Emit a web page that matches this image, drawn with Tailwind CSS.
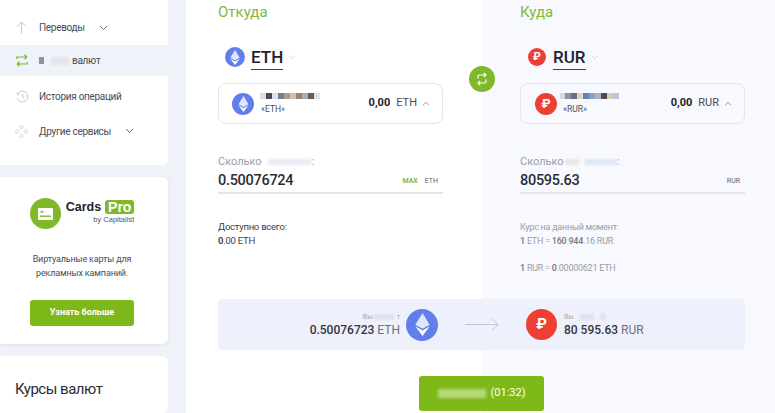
<!DOCTYPE html>
<html lang="ru">
<head>
    <meta charset="UTF-8">
    <title>Обмен валют</title>
    <script src="https://cdn.jsdelivr.net/npm/@tailwindcss/browser@4"></script>
</head>
<body class="bg-[#f0f2f9] font-['Roboto',sans-serif] text-[#2b2d33] h-[413px] w-[775px] overflow-hidden">
<div class="flex h-[413px] overflow-hidden">
    <!-- Sidebar -->
    <aside class="w-[168px] shrink-0 flex flex-col gap-3">
        <nav class="bg-white rounded-br-md h-[165px] pt-[10px] text-[10px] tracking-[-0.3px] text-[#4a4d57]">
            <div class="h-[35px] flex items-center pl-[15px] gap-[11px]">
                <svg class="w-[13px] h-[13px]" viewBox="0 0 13 13" fill="none" stroke="#c3c7cf" stroke-width="1"><path d="M6.5 12.5V1M2 5.5 6.5 1 11 5.5"/></svg>
                <span>Переводы</span>
                <svg class="w-[9px] h-[6px] ml-[3px]" viewBox="0 0 9 6" fill="none" stroke="#6b6f7a"><path d="M1 1l3.5 3.5L8 1"/></svg>
            </div>
            <div class="h-[31px] bg-[#f0f2f9] flex items-center pl-[16px] gap-[11px]">
                <svg class="w-[12px] h-[13px]" viewBox="0 0 12 13" fill="none" stroke="#7fb92a" stroke-width="1.2"><path d="M.8 5V3h10M8.5.8l2.3 2.2-2.3 2.2M11.2 8v2H1M3.5 7.8 1.2 10l2.3 2.2"/></svg>
                <span class="flex items-center">
                    <span class="w-[5px] h-[7px] bg-[#8b93a6] blur-[0.5px]"></span>
                    <span class="w-[18px] h-[8px] ml-[7px] bg-[#e4e5ea] blur-[1px]"></span>
                    <span class="ml-[3px]">валют</span>
                </span>
            </div>
            <div class="h-[40px] flex items-center pl-[16px] gap-[10px]">
                <svg class="w-[13px] h-[13px]" viewBox="0 0 13 13" fill="none" stroke="#c3c7cf"><path d="M1.6 4.2A5.4 5.4 0 1 1 1.2 8M.6 2.6l1 1.9 1.9-.7M6.6 3.8v3l2 1"/></svg>
                <span>История операций</span>
            </div>
            <div class="h-[30px] flex items-center pl-[14px] gap-[10px]">
                <svg class="w-[15px] h-[15px]" viewBox="0 0 15 15" fill="none" stroke="#c9ccd4" stroke-width=".9"><path d="M7.5 1l2 2-2 2-2-2zM3 5.5l2 2-2 2-2-2zM12 5.5l2 2-2 2-2-2zM7.5 10l2 2-2 2-2-2z"/></svg>
                <span>Другие сервисы</span>
                <svg class="w-[9px] h-[6px] ml-[4px]" viewBox="0 0 9 6" fill="none" stroke="#6b6f7a"><path d="M1 1l3.5 3.5L8 1"/></svg>
            </div>
        </nav>
        <section class="bg-white rounded-r-md h-[167px] pr-[4px] shadow-[0_1px_4px_rgba(40,50,80,0.08)] flex flex-col items-center">
            <div class="flex mt-[21px] items-center">
                <div class="w-[31px] h-[31px] rounded-full bg-[#7fb92a] flex items-center justify-center">
                    <svg class="w-[15px] h-[12px]" viewBox="0 0 15 12"><rect width="15" height="12" rx="1" fill="#fff"/><rect x="2.5" y="3" width="3" height="1.6" fill="#7fb92a"/><rect x="2" y="7.5" width="11" height="1.4" fill="#7fb92a"/></svg>
                </div>
                <div class="ml-[5px] mt-[-3px] font-['Liberation_Sans',sans-serif] text-right">
                    <div class="flex items-center gap-[4px] text-[12.5px] font-bold text-[#20232b] leading-[14px]">
                        Cards
                        <span class="bg-[#7fb92a] text-white rounded-[3px] w-[29px] text-center text-[14px] leading-[14px]">Pro</span>
                    </div>
                    <div class="text-[7.5px] text-[#55585f] leading-[9px] mt-[1px]">by Capitalist</div>
                </div>
            </div>
            <p class="text-[9px] tracking-[-0.15px] leading-[14px] text-center text-[#4a4d57] mt-[23px]">Виртуальные карты для<br>рекламных кампаний.</p>
            <a class="mt-[20px] w-[104px] h-[26px] rounded-[3px] bg-[#7fb919] text-white font-bold text-[9px] flex items-center justify-center">Узнать больше</a>
        </section>
        <section class="bg-white rounded-r-md flex-1 pt-[22px] pl-[15px]">
            <h2 class="text-[15px] tracking-[-0.5px] leading-[22px] text-[#2b2d33]">Курсы валют</h2>
        </section>
    </aside>

    <!-- Exchange form -->
    <main class="relative ml-[18px] flex-1 bg-[linear-gradient(90deg,#fff_296px,#f8f9fe_296px)]">
        <div class="flex h-[299px]">
            <div class="w-[296px] pl-[32px] shrink-0">
                <h2 class="text-[15px] leading-[20px] pt-[2px] text-[#84b83a]">Откуда</h2>
                <div class="mt-[24px] ml-[7px] flex items-center h-[22px]">
                    <span class="w-[20px] h-[20px] rounded-full bg-[#627eea] flex items-center justify-center">
                        <svg class="w-[10px] h-[15px]" viewBox="0 0 10 16"><path d="M5 0 0 8.2 5 11l5-2.8z" fill="#dfe5fb"/><path d="M5 12.2 0 9.2 5 16l5-6.8z" fill="#fff"/></svg>
                    </span>
                    <span class="ml-[6px] text-[17px] leading-[22px] font-medium text-[#20232b] border-b border-[#444] h-[24px] mt-[2px]">ETH</span>
                    <svg class="w-[7px] h-[5px] ml-[5px]" viewBox="0 0 9 6" fill="none" stroke="#c3c7cf"><path d="M1 1l3.5 3.5L8 1"/></svg>
                </div>
                <div class="mt-[15px] w-[225px] h-[41px] border border-[#e3e5ea] rounded-lg bg-white flex items-center pl-[13px] pr-[12px]">
                    <span class="w-[22px] h-[22px] rounded-full bg-[#627eea] flex items-center justify-center">
                        <svg class="w-[11px] h-[16px]" viewBox="0 0 10 16"><path d="M5 0 0 8.2 5 11l5-2.8z" fill="#dfe5fb"/><path d="M5 12.2 0 9.2 5 16l5-6.8z" fill="#fff"/></svg>
                    </span>
                    <div class="ml-[6px] flex-1">
                        <div class="flex h-[6px] blur-[0.4px] w-[60px]">
                            <i class="w-[6px] bg-[#dcdde3]"></i><i class="w-[6px] bg-[#4c4a55]"></i><i class="w-[6px] bg-[#dce3ea]"></i><i class="w-[6px] bg-[#6d7f92]"></i><i class="w-[6px] bg-[#b39a85]"></i><i class="w-[6px] bg-[#c9c1b4]"></i><i class="w-[6px] bg-[#a67f6b]"></i><i class="w-[6px] bg-[#9eb0bf]"></i><i class="w-[6px] bg-[#6c5a50]"></i><i class="w-[6px] bg-[#e5e3e3]"></i>
                        </div>
                        <div class="text-[8.5px] leading-[10px] mt-[5px] ml-px text-[#4a4d57]">«ETH»</div>
                    </div>
                    <span class="text-[11px] font-bold text-[#20232b]">0,00</span>
                    <span class="text-[11px] ml-[6px] text-[#4a4d57]">ETH</span>
                    <svg class="w-[8px] h-[5px] ml-[5px]" viewBox="0 0 9 6" fill="none" stroke="#7d818c"><path d="M1 5l3.5-3.5L8 5"/></svg>
                </div>
                <label class="block mt-[30px] text-[11px] leading-[16px] text-[#9a9da6]">
                    <span class="inline-flex items-center">Сколько <i class="w-[44px] h-[6px] ml-[6px] bg-[#e8ecf3] blur-[1.5px]"></i>:</span>
                </label>
                <div class="w-[225px] h-[24px] border-b-2 border-[#e3e4e8] flex items-center">
                    <span class="flex-1 text-[14.5px] tracking-[-0.3px] font-medium text-[#2b2d33]">0.50076724</span>
                    <span class="text-[7px] font-bold text-[#8ab83d]">MAX</span>
                    <span class="text-[7px] ml-[7px] mr-[5px] text-[#5b5e68]">ETH</span>
                </div>
                <p class="mt-[26px] text-[9.5px] tracking-[-0.25px] leading-[14px] text-[#3d4048]">Доступно всего:<br><b class="font-semibold">0</b>.00 ETH</p>
            </div>
            <div class="flex-1 pl-[38px]">
                <h2 class="text-[15px] leading-[20px] pt-[2px] text-[#84b83a]">Куда</h2>
                <div class="mt-[24px] ml-[8px] flex items-center h-[22px]">
                    <span class="w-[18px] h-[18px] rounded-full bg-[#ee3f35] text-white text-[11px] font-bold flex items-center justify-center">₽</span>
                    <span class="ml-[7px] text-[17px] leading-[22px] font-medium text-[#20232b] border-b border-[#444] h-[24px] mt-[2px]">RUR</span>
                    <svg class="w-[7px] h-[5px] ml-[5px]" viewBox="0 0 9 6" fill="none" stroke="#c3c7cf"><path d="M1 1l3.5 3.5L8 1"/></svg>
                </div>
                <div class="mt-[15px] w-[225px] h-[41px] border border-[#e3e5ea] rounded-lg flex items-center pl-[14px] pr-[12px]">
                    <span class="w-[22px] h-[22px] rounded-full bg-[#ee3f35] text-white text-[13px] font-bold flex items-center justify-center">₽</span>
                    <div class="ml-[3px] flex-1">
                        <div class="flex h-[6px] blur-[0.4px] w-[60px]">
                            <i class="w-[5px] bg-[#d7dae3]"></i><i class="w-[6px] bg-[#8d93a5]"></i><i class="w-[6px] bg-[#6c7082]"></i><i class="w-[6px] bg-[#ddd3c0]"></i><i class="w-[6px] bg-[#5f85c0]"></i><i class="w-[6px] bg-[#8ea0b8]"></i><i class="w-[6px] bg-[#a9b5c4]"></i><i class="w-[6px] bg-[#544b50]"></i><i class="w-[6px] bg-[#d9cdb6]"></i><i class="w-[6px] bg-[#bcc7dc]"></i>
                        </div>
                        <div class="text-[8.5px] leading-[10px] mt-[5px] ml-[3px] text-[#4a4d57]">«RUR»</div>
                    </div>
                    <span class="text-[11px] font-bold text-[#20232b]">0,00</span>
                    <span class="text-[11px] ml-[6px] text-[#4a4d57]">RUR</span>
                    <svg class="w-[8px] h-[5px] ml-[5px]" viewBox="0 0 9 6" fill="none" stroke="#7d818c"><path d="M1 5l3.5-3.5L8 5"/></svg>
                </div>
                <label class="block mt-[30px] text-[11px] leading-[16px] text-[#9a9da6]">
                    <span class="inline-flex items-center">Сколько<i class="w-[14px] h-[6px] ml-[1px] bg-[#ebe6e2] blur-[1px]"></i><i class="w-[32px] h-[6px] ml-[6px] bg-[#dfe7f4] blur-[1px]"></i>:</span>
                </label>
                <div class="w-[225px] h-[24px] border-b-2 border-[#e3e4e8] flex items-center justify-between">
                    <span class="text-[14.5px] tracking-[-0.3px] font-medium text-[#2b2d33]">80595.63</span>
                    <span class="text-[7px] mr-[5px] text-[#5b5e68]">RUR</span>
                </div>
                <div class="mt-[26px] text-[9px] tracking-[-0.25px] leading-[14px] text-[#9a9da6]">
                    <p>Курс на данный момент:</p>
                    <p><b class="font-semibold text-[#7d818c]">1</b> ETH = <b class="font-semibold text-[#7d818c]">160 944</b>.16 RUR</p>
                    <p class="mt-[13px]"><b class="font-semibold text-[#7d818c]">1</b> RUR = <b class="font-semibold text-[#7d818c]">0</b>.00000621 ETH</p>
                </div>
            </div>
        </div>

        <!-- Summary -->
        <div class="ml-[32px] w-[527px] h-[51px] bg-[#eef0fb] rounded-[4px] flex items-center">
            <div class="w-[182px] text-right">
                <div class="text-[7px] leading-[10px] text-[#a5a8b2] flex justify-end items-center">Вы<i class="w-[20px] h-[6px] ml-px mr-[3px] bg-[#dfe2ee] blur-[1px]"></i>т</div>
                <div class="text-[12px] leading-[16px] font-medium text-[#33353c]">0.50076723 <span class="font-normal text-[#6d7079]">ETH</span></div>
            </div>
            <span class="ml-[6px] w-[32px] h-[32px] rounded-full bg-[#627eea] flex items-center justify-center">
                <svg class="w-[15px] h-[23px]" viewBox="0 0 10 16"><path d="M5 0 0 8.2 5 11l5-2.8z" fill="#dfe5fb"/><path d="M5 12.2 0 9.2 5 16l5-6.8z" fill="#fff"/></svg>
            </span>
            <svg class="w-[34px] h-[13px] ml-[27px]" viewBox="0 0 34 13" fill="none" stroke="#c2c5cf"><path d="M0 6.5h33M27 .7l6 5.8-6 5.8"/></svg>
            <span class="ml-[27px] w-[31px] h-[31px] rounded-full bg-[#ee3f35] text-white text-[15px] font-bold flex items-center justify-center">₽</span>
            <div class="ml-[7px]">
                <div class="text-[7px] leading-[10px] text-[#a5a8b2] flex items-center">Вы<i class="w-[14px] h-[6px] ml-[6px] bg-[#dfe2ee] blur-[1px]"></i><i class="w-[6px] h-[6px] ml-[6px] bg-[#dfe2ee] blur-[1px]"></i></div>
                <div class="text-[12px] leading-[16px] font-medium text-[#33353c]">80 595.63 <span class="font-normal text-[#6d7079]">RUR</span></div>
            </div>
        </div>

        <button class="mt-[26px] ml-[233px] w-[125px] h-[35px] bg-[#7fb919] rounded-[3px] text-white text-[11px] flex items-center justify-center">
            <i class="w-[48px] h-[9px] mr-[5px] bg-[#b5d97a] blur-[1.5px]"></i>(01:32)
        </button>

        <!-- Swap button sits over the column boundary -->
        <button class="absolute left-[283px] top-[66px] w-[26px] h-[26px] rounded-full bg-[#7fb92a] flex items-center justify-center">
            <svg class="w-[10px] h-[14px]" viewBox="0 0 10 14" fill="none" stroke="#fff" stroke-width="1.2"><path d="M1 6.5V4.5a1.5 1.5 0 0 1 1.5-1.5H9M6.8.8 9 3 6.8 5.2M9 7.5v2A1.5 1.5 0 0 1 7.5 11H1M3.2 8.8 1 11l2.2 2.2"/></svg>
        </button>
    </main>
</div>
</body>
</html>
